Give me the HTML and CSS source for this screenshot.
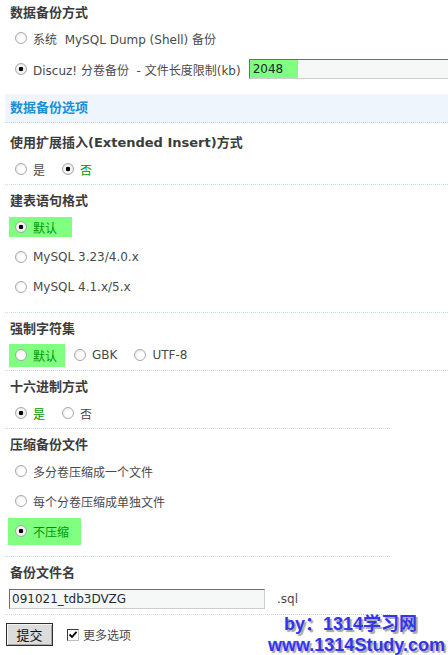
FILE: index.html
```html
<!DOCTYPE html>
<html lang="zh">
<head>
<meta charset="utf-8">
<title>数据备份</title>
<link rel="stylesheet" href="styles.css">
</head>
<body>
<div class="sec-a">
  <div class="title title-a">数据备份方式</div>
  <label class="row"><input type="radio" class="radio" name="type"><span>系统&nbsp; MySQL Dump (Shell) 备份</span></label>
  <label class="row row-b"><input type="radio" class="radio" name="type" checked><span>Discuz! 分卷备份&nbsp; - 文件长度限制(kb)</span><span class="field field-size"><span class="fill">2048</span></span></label>
</div>

<div class="band">数据备份选项</div>

<div class="sub sub-first">
  <div class="title">使用扩展插入(Extended Insert)方式</div>
  <div class="row">
    <label class="opt"><input type="radio" class="radio" name="ext"><span>是</span></label>
    <label class="opt on"><input type="radio" class="radio" name="ext" checked><span>否</span></label>
  </div>
</div>

<div class="sub">
  <div class="title">建表语句格式</div>
  <div class="list">
    <div class="row"><label class="opt on hl hl-a"><input type="radio" class="radio" name="ver" checked><span>默认</span></label></div>
    <div class="row"><label class="opt"><input type="radio" class="radio" name="ver"><span>MySQL 3.23/4.0.x</span></label></div>
    <div class="row"><label class="opt"><input type="radio" class="radio" name="ver"><span>MySQL 4.1.x/5.x</span></label></div>
  </div>
</div>

<div class="sub">
  <div class="title">强制字符集</div>
  <div class="row">
    <label class="opt on hl hl-b"><input type="radio" class="radio" name="cs"><span>默认</span></label>
    <label class="opt"><input type="radio" class="radio" name="cs"><span>GBK</span></label>
    <label class="opt"><input type="radio" class="radio" name="cs"><span>UTF-8</span></label>
  </div>
</div>

<div class="sub sub-narrow">
  <div class="title">十六进制方式</div>
  <div class="row">
    <label class="opt on"><input type="radio" class="radio" name="hex" checked><span>是</span></label>
    <label class="opt"><input type="radio" class="radio" name="hex"><span>否</span></label>
  </div>
</div>

<div class="sub sub-narrow">
  <div class="title">压缩备份文件</div>
  <div class="list">
    <div class="row"><label class="opt"><input type="radio" class="radio" name="zip"><span>多分卷压缩成一个文件</span></label></div>
    <div class="row"><label class="opt"><input type="radio" class="radio" name="zip"><span>每个分卷压缩成单独文件</span></label></div>
    <div class="row"><label class="opt on hl hl-c"><input type="radio" class="radio" name="zip" checked><span>不压缩</span></label></div>
  </div>
</div>

<div class="sub sub-narrow">
  <div class="title">备份文件名</div>
  <div class="row">
    <span class="field field-name">091021_tdb3DVZG</span><span class="ext">.sql</span>
  </div>
</div>

<div class="actions">
  <button class="btn" type="button">提交</button>
  <label class="check"><span class="box"><svg width="10" height="10" viewBox="0 0 10 10"><path d="M1.5 4.5 L4 7 L8.5 1.8" fill="none" stroke="#000" stroke-width="1.8"/></svg></span><span>更多选项</span></label>
</div>

<div class="mark">
  <div class="mark-1">by：1314学习网</div>
  <div class="mark-2">www.1314Study.com</div>
</div>
</body>
</html>
```

FILE: styles.css
```css
html, body {
  margin: 0;
  padding: 0;
}
body {
  width: 448px;
  height: 655px;
  overflow: hidden;
  position: relative;
  background: #fff;
  font: 12px "DejaVu Sans", "Noto Sans CJK SC", sans-serif;
  color: #4a4a4a;
}

.title {
  font-size: 13px;
  font-weight: bold;
  line-height: 22px;
  height: 22px;
  color: #3c3c3c;
  white-space: nowrap;
}

.sec-a {
  padding: 0 0 13px 10px;
}
.title-a {
  height: 26px;
  line-height: 26px;
}

.row {
  display: flex;
  align-items: center;
  height: 24px;
  padding-left: 4px;
  white-space: nowrap;
}
.sub .title + .row,
.sub .title + .list {
  margin-top: 3px;
}
.list {
  display: flex;
  flex-direction: column;
  gap: 6px;
  margin-bottom: 10px;
}
.row-b {
  margin-top: 7px;
}

.radio {
  -webkit-appearance: none;
  appearance: none;
  box-sizing: border-box;
  width: 12px;
  height: 12px;
  margin: 0 6px 0 1px;
  border: 1px solid #a9a9a9;
  border-radius: 50%;
  background: radial-gradient(circle at 60% 60%, #ffffff 35%, #dedede 100%);
  flex-shrink: 0;
}
.radio:checked {
  background: radial-gradient(circle at 50% 50%, #000 0 2px, #f8f8f8 2.6px 45%, #d6d6d6 100%);
}

.opt {
  display: flex;
  align-items: center;
  margin-right: 16px;
}
.opt.on {
  color: #009900;
}
.hl {
  background: #80ff80;
  margin-left: -5px;
  padding: 0 8px 0 5px;
  margin-right: 8px;
  color: #007c00;
}
.hl-a {
  height: 20px;
  padding-right: 15px;
}
.hl-b {
  height: 23px;
}
.hl-c {
  height: 27px;
  margin-left: -6px;
  padding-left: 6px;
  padding-right: 12px;
}

.field {
  display: block;
  box-sizing: border-box;
  height: 20px;
  border: 1px solid;
  border-color: #6e6e6e #cfcfcf #cfcfcf #6e6e6e;
  background: #f6f8f8;
  color: #1e2a36;
  line-height: 18px;
  flex-shrink: 0;
}
.field-size {
  margin-left: 8px;
  width: 220px;
}
.fill {
  display: block;
  width: 48px;
  height: 18px;
  box-sizing: border-box;
  padding-left: 3px;
  background: #80ff80;
}
.field-name {
  width: 256px;
  margin-left: -5px;
  padding-left: 2px;
}
.ext {
  margin-left: 12px;
}

.band {
  margin-left: 5px;
  height: 28px;
  line-height: 28px;
  padding-left: 5px;
  background: #eff5fd;
  color: #1b8fd2;
  font-size: 13px;
  font-weight: bold;
  border-bottom: 1px dotted #d3d3d3;
}

.sub {
  margin-left: 5px;
  padding: 5px 0 3px 5px;
  border-bottom: 1px dotted #c3daec;
}
.sub-first {
  padding-top: 9px;
}
.sub-narrow {
  width: 380px;
}

.actions {
  display: flex;
  align-items: center;
  padding: 8px 0 0 6px;
}
.btn {
  box-sizing: border-box;
  width: 47px;
  height: 23px;
  margin: 0;
  padding: 0;
  border: 1px solid #2e2e2e;
  box-shadow: inset 1px 1px 0 #f4f4f4, inset -1px -1px 0 #a8a8a8;
  background: #dcdcdc;
  font: 13px "DejaVu Sans", "Noto Sans CJK SC", sans-serif;
  color: #111;
}
.check {
  display: flex;
  align-items: center;
  margin-left: 14px;
}
.box {
  box-sizing: border-box;
  width: 12px;
  height: 12px;
  margin-right: 4px;
  border: 1px solid;
  border-color: #3a3a3a #bdbdbd #bdbdbd #3a3a3a;
  background: #fff;
  display: flex;
  align-items: center;
  justify-content: center;
}
.box svg {
  display: block;
}

.mark {
  position: absolute;
  left: 266px;
  top: 614px;
  font: bold 18px "Liberation Sans", "Noto Sans CJK SC", sans-serif;
  line-height: 21px;
  color: #3434ee;
  text-shadow: 2px 2px 1px #a6a6a6;
  white-space: nowrap;
}
.mark-1 {
  padding-left: 18px;
}
.mark-2 {
  padding-left: 2px;
}
```
